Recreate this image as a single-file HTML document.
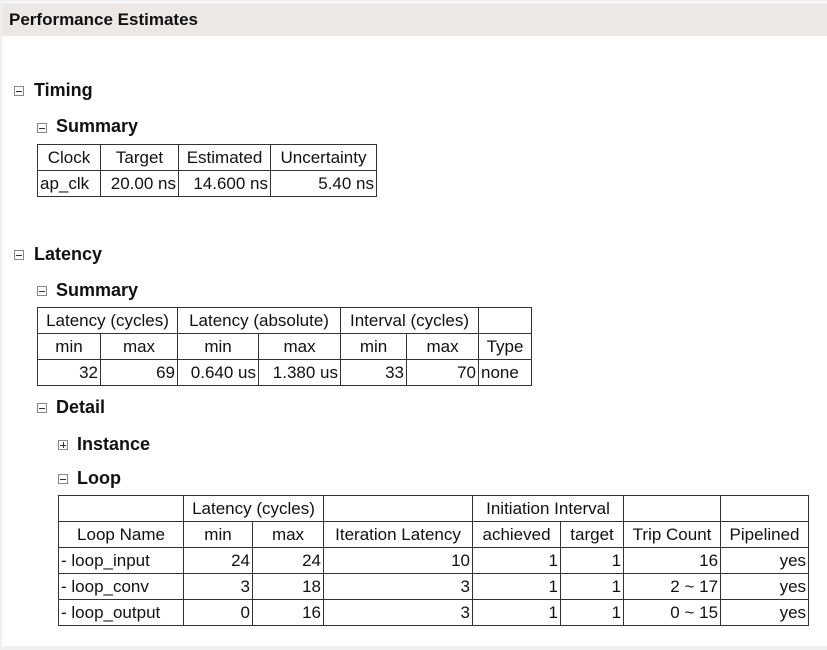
<!DOCTYPE html>
<html><head><meta charset="utf-8"><style>
html,body{margin:0;padding:0;width:827px;height:650px;overflow:hidden;background:#f0f0f0;font-family:"Liberation Sans",sans-serif;color:#111}
#pg{position:absolute;left:2px;top:2px;width:825px;height:644px;background:#fff}
#hdr{position:absolute;left:0;top:1px;width:825px;height:33px;background:#ece8e6}
#hdr span{position:absolute;left:7px;top:7px;font-weight:bold;font-size:17px}
.h{position:absolute;font-weight:bold;font-size:18px;line-height:20px}
.ic{position:absolute;width:8px;height:8px;border:1px solid #888;background:#fff}
.ic:after{content:"";position:absolute;left:1px;top:3.5px;width:6px;height:1px;background:#333}
.ic.p:before{content:"";position:absolute;left:3.5px;top:1px;width:1px;height:6px;background:#333}
table{position:absolute;border-collapse:collapse;table-layout:fixed;font-size:17px}
td{border:1px solid #333;padding:0 2px;height:25px;white-space:nowrap;overflow:hidden;line-height:25px}
.c{text-align:center}.r{text-align:right}
</style></head><body><div id="pg">
<div id="hdr"><span>Performance Estimates</span></div>

<div class="ic" style="left:12px;top:84px"></div><div class="h" style="left:32px;top:78px">Timing</div>
<div class="ic" style="left:35px;top:121px"></div><div class="h" style="left:54px;top:114px">Summary</div>
<table style="left:35px;top:142px;width:339px">
<col style="width:63px"><col style="width:78px"><col style="width:92px"><col style="width:106px">
<tr><td class="c">Clock</td><td class="c">Target</td><td class="c">Estimated</td><td class="c">Uncertainty</td></tr>
<tr><td>ap_clk</td><td class="r">20.00 ns</td><td class="r">14.600 ns</td><td class="r">5.40 ns</td></tr>
</table>

<div class="ic" style="left:12px;top:248px"></div><div class="h" style="left:32px;top:242px">Latency</div>
<div class="ic" style="left:35px;top:284px"></div><div class="h" style="left:54px;top:278px">Summary</div>
<table style="left:35px;top:305px;width:494px">
<col style="width:63px"><col style="width:77px"><col style="width:81px"><col style="width:82px"><col style="width:66px"><col style="width:72px"><col style="width:53px">
<tr><td colspan="2" class="c">Latency (cycles)</td><td colspan="2" class="c">Latency (absolute)</td><td colspan="2" class="c">Interval (cycles)</td><td></td></tr>
<tr><td class="c">min</td><td class="c">max</td><td class="c">min</td><td class="c">max</td><td class="c">min</td><td class="c">max</td><td class="c">Type</td></tr>
<tr><td class="r">32</td><td class="r">69</td><td class="r">0.640 us</td><td class="r">1.380 us</td><td class="r">33</td><td class="r">70</td><td>none</td></tr>
</table>

<div class="ic" style="left:35px;top:401px"></div><div class="h" style="left:54px;top:395px">Detail</div>
<div class="ic p" style="left:56px;top:438px"></div><div class="h" style="left:75px;top:432px">Instance</div>
<div class="ic" style="left:56px;top:472px"></div><div class="h" style="left:75px;top:466px">Loop</div>
<table style="left:56px;top:493px;width:750px">
<col style="width:125px"><col style="width:69px"><col style="width:71px"><col style="width:149px"><col style="width:88px"><col style="width:63px"><col style="width:97px"><col style="width:88px">
<tr><td></td><td colspan="2" class="c">Latency (cycles)</td><td></td><td colspan="2" class="c">Initiation Interval</td><td></td><td></td></tr>
<tr><td class="c">Loop Name</td><td class="c">min</td><td class="c">max</td><td class="c">Iteration Latency</td><td class="c">achieved</td><td class="c">target</td><td class="c">Trip Count</td><td class="c">Pipelined</td></tr>
<tr><td>- loop_input</td><td class="r">24</td><td class="r">24</td><td class="r">10</td><td class="r">1</td><td class="r">1</td><td class="r">16</td><td class="r">yes</td></tr>
<tr><td>- loop_conv</td><td class="r">3</td><td class="r">18</td><td class="r">3</td><td class="r">1</td><td class="r">1</td><td class="r">2 ~ 17</td><td class="r">yes</td></tr>
<tr><td>- loop_output</td><td class="r">0</td><td class="r">16</td><td class="r">3</td><td class="r">1</td><td class="r">1</td><td class="r">0 ~ 15</td><td class="r">yes</td></tr>
</table>
</div></body></html>
